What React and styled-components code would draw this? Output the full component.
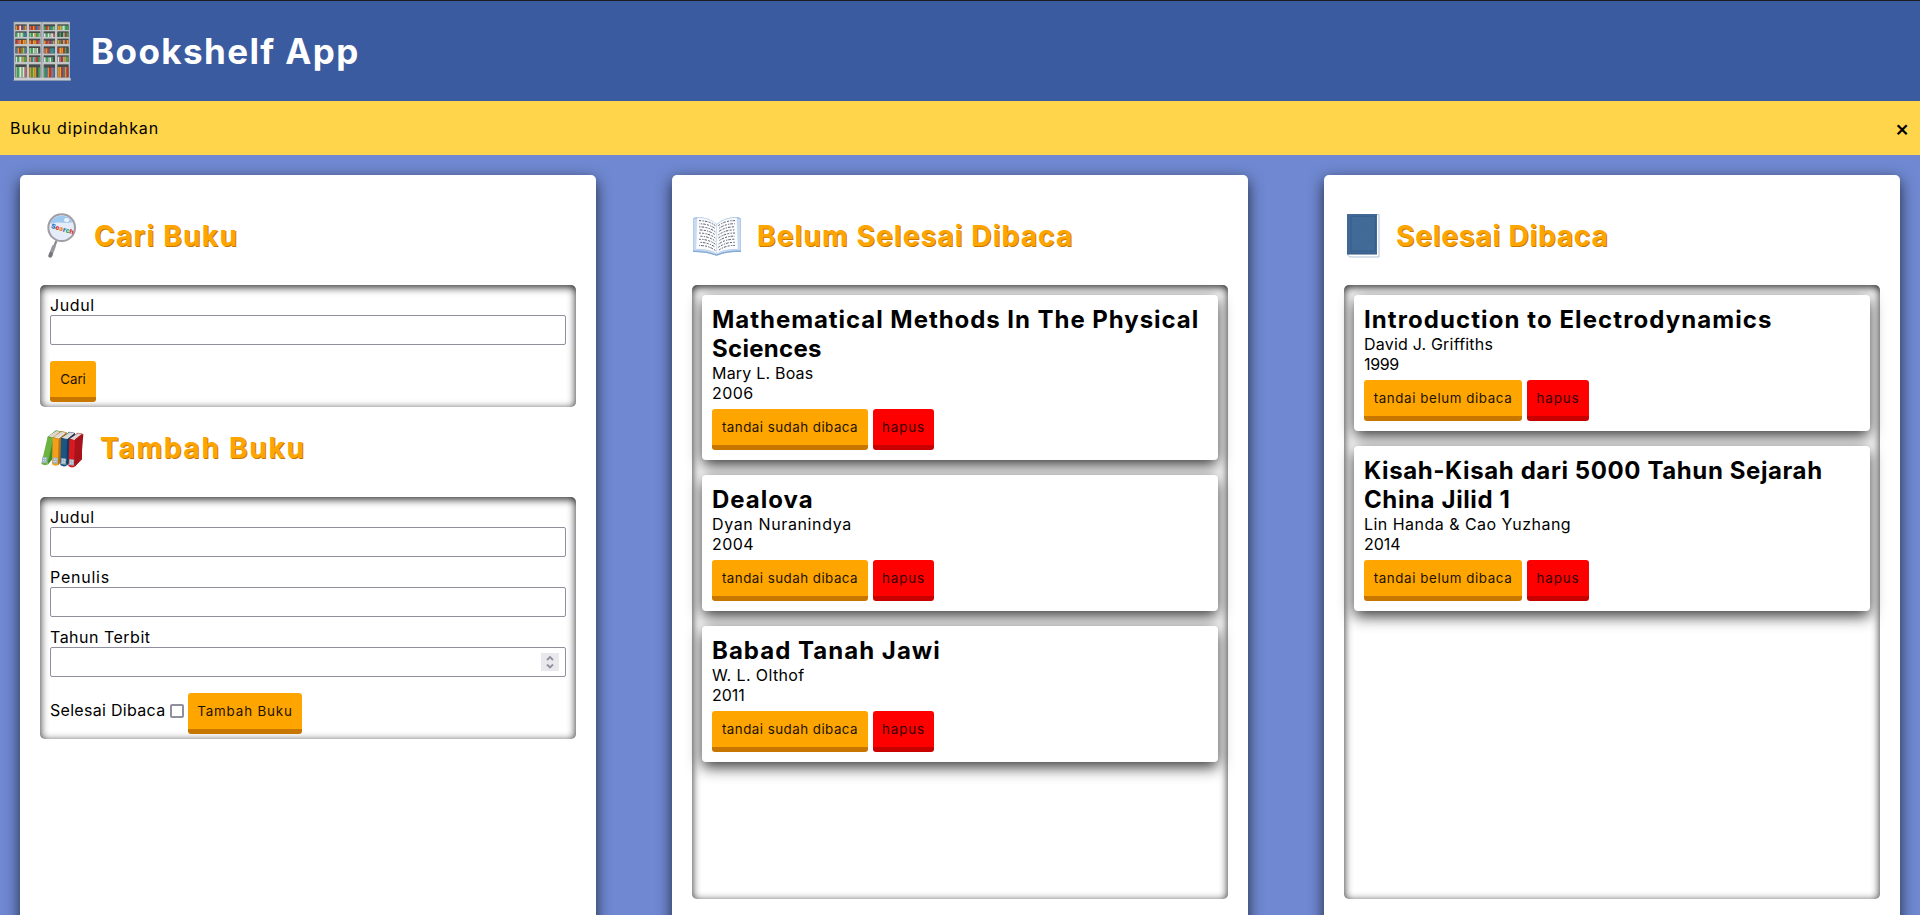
import React from 'react';
import styled, { createGlobalStyle } from 'styled-components';

const GlobalStyle = createGlobalStyle`
  *, *::before, *::after { box-sizing: border-box; }
  body {
    margin: 0;
    background: #6f88d1;
    color: #000;
    font: 16px/20px Inter, "Open Sans", sans-serif;
  }
  h1, h2, h3, p { margin: 0; }
`;

const Page = styled.div`
  height: 100vh;
  display: flex;
  flex-direction: column;
  overflow: hidden;
`;

const Header = styled.header`
  flex: none;
  display: flex;
  align-items: center;
  gap: 19px;
  height: 101px;
  padding: 0 12px;
  border-top: 1px solid #1c1b22;
  background: #3a5ba0;
`;

const Tracked = styled.span`
  letter-spacing: ${(p) => p.$track || 0}px;
  white-space: nowrap;
`;

const AppTitle = styled.h1`
  color: #fff;
  font-size: 35px;
  font-weight: 700;
  line-height: 44px;
`;

const Notification = styled.div`
  flex: none;
  display: flex;
  align-items: center;
  justify-content: space-between;
  height: 54px;
  padding: 0 10px;
  background: #ffd54b;
`;

const CloseButton = styled.button`
  width: 16px;
  padding: 0;
  border: 0;
  background: none;
  color: #000;
  font: 500 22px/20px Inter, sans-serif;
`;

const Main = styled.main`
  flex: none;
  display: flex;
  justify-content: space-between;
  padding: 20px;
`;

const Panel = styled.section`
  width: 576px;
  height: 764px;
  padding: 20px;
  border-radius: 5px;
  background: #fff;
  box-shadow: 0 5px 15px rgba(0, 0, 0, 0.7);
`;

const PanelHeading = styled.div`
  display: flex;
  align-items: center;
  gap: 15px;
  height: 80px;
  margin-bottom: 10px;
`;

const PanelTitle = styled.h2`
  padding-top: 1px;
  color: #ffa500;
  font-size: 28px;
  font-weight: 700;
  line-height: 34px;
  text-shadow: 1px 1px 0 #c77700;
`;

const Inset = styled.div`
  border-radius: 5px;
  box-shadow: inset 0 2px 8px rgba(0, 0, 0, 0.9);
`;

const Form = styled(Inset).attrs({ as: 'form' })`
  display: flex;
  flex-direction: column;
  gap: 10px;
  padding: 10px 10px 5px;
`;

const Field = styled.label`
  display: flex;
  flex-direction: column;
`;

const InputBox = styled.span`
  display: flex;
  align-items: center;
  height: 30px;
  padding-right: 6px;
  border: 1px solid #8f8f9d;
  border-radius: 2px;
  background: #fff;
`;

const Input = styled.input`
  flex: 1;
  min-width: 0;
  border: 0;
  outline: 0;
  background: none;
  font: inherit;
`;

const Spinner = styled.svg`
  flex: none;
  width: 18px;
  height: 18px;
  background: #e9e9ed;
`;

const FormActions = styled.div`
  display: flex;
  align-items: center;
  gap: 4px;
  margin-top: 6px;
`;

const CheckLabel = styled.label`
  display: flex;
  align-items: center;
  width: 134px;
  justify-content: space-between;
  padding-bottom: 7px;
`;

const Checkbox = styled.input.attrs({ type: 'checkbox' })`
  appearance: none;
  width: 14px;
  height: 14px;
  margin: 2px 0 0;
  border: 2px solid #8f8f9d;
  border-radius: 2px;
  background: #fff;
`;

const Button = styled.button`
  width: ${(p) => p.$width}px;
  height: 41px;
  padding: 0;
  border: 0;
  border-bottom: 5px solid ${(p) => (p.$danger ? '#c80000' : '#c77700')};
  border-radius: 3px;
  background: ${(p) => (p.$danger ? '#ff0000' : '#ffa500')};
  color: ${(p) => (p.$danger ? '#300' : '#1c1200')};
  font: 13.333px/16px Inter, sans-serif;
`;

const Shelf = styled(Inset)`
  display: flex;
  flex-direction: column;
  gap: 15px;
  height: 614px;
  padding: 10px;
`;

const Card = styled.article`
  padding: 10px;
  border-radius: 4px;
  background: #fff;
  box-shadow: 0 5px 15px rgba(0, 0, 0, 0.8);
`;

const BookTitle = styled.h3`
  display: flex;
  flex-direction: column;
  font-size: 24px;
  font-weight: 700;
  line-height: 29px;
`;

const CardActions = styled.div`
  display: flex;
  gap: 5px;
  margin-top: 6px;
`;

const Picture = styled.svg`
  flex: none;
  width: ${(p) => p.$w}px;
  height: ${(p) => p.$h}px;
`;

const SHELF_ROWS = [[25, 17], [46, 17], [68, 16], [91, 21], [118, 20], [145, 39]];
const SHELF_COLUMNS = [22, 63, 107, 148];
const SHELF_COLORS = {
  g: '#3fa458', l: '#86c48f', w: '#d9e2d6', r: '#bd3434', o: '#e0922b',
  y: '#d6ad33', b: '#3b7bae', p: '#b9676f', k: '#4a4f4c',
};
const SHELF_BOOKS = [
  ['orwrbo', 'prorbp', 'grobgl', 'oylwgg'],
  ['gwlwgb', 'lgwogl', 'wgwlwp', 'kgklrg'],
  ['rporyo', 'oryorp', 'orprbo', 'ogrlro'],
  ['borgyb', 'lgwlwk', 'porbgb', 'ryorgk'],
  ['wgwlog', 'oblprg', 'wglwgk', 'wprlog'],
  ['lgwlwp', 'ogyokg', 'gborpb', 'oyrbor'],
];

const BookshelfIcon = () => (
  <Picture $w={60} $h={60} viewBox="12 15 180 180">
    <path d="M17 17h169v173l3 4H16l2-4z" fill="#a9adb2" />
    <path d="M20 20h164v166H20z" fill="#c3c5c9" />
    {SHELF_ROWS.map(([y, h], row) =>
      SHELF_COLUMNS.map((x, col) => (
        <g key={`${row}-${col}`}>
          <rect x={x} y={y} width="34" height={h} fill="#454b4b" />
          {[...SHELF_BOOKS[row][col]].map((c, i) => (
            <rect
              key={i}
              x={x + 1 + i * 5.4}
              y={y + (row === 5 ? 8 : 4) + ((i * 3 + col) % 3)}
              width="5.2"
              height={h - (row === 5 ? 8 : 4) - ((i * 3 + col) % 3)}
              fill={SHELF_COLORS[c]}
            />
          ))}
        </g>
      ))
    )}
    <path d="M101 19v169" stroke="#a0a5ab" strokeWidth="4" />
    <path d="M18 189h170" stroke="#c9ccd0" strokeWidth="6" />
  </Picture>
);

const SearchIcon = () => (
  <Picture $w={39} $h={50} viewBox="15 15 117 150">
    <path d="M64 108 54 134" stroke="#8d8b91" strokeWidth="7" />
    <path d="M56 126 46 152" stroke="#99979d" strokeWidth="11" strokeLinecap="round" />
    <path d="M48 147 46 152" stroke="#77757c" strokeWidth="11" strokeLinecap="round" />
    <circle cx="80" cy="68" r="40" fill="#e3ecf8" stroke="#a09da5" strokeWidth="6" />
    <path d="M46 57a36 36 0 0 1 66-6c-14 7-39-4-66 6z" fill="#9fc9ee" />
    <ellipse cx="95" cy="45" rx="8" ry="6" fill="#fff" opacity=".8" />
    <text x="47" y="69" transform="rotate(16 47 69)" fontFamily="Inter, sans-serif" fontSize="20" fontWeight="800">
      <tspan fill="#1c6fc4">S</tspan>
      <tspan fill="#d8302c">e</tspan>
      <tspan fill="#ef8a20">a</tspan>
      <tspan fill="#1c6fc4">r</tspan>
      <tspan fill="#2aa04a">c</tspan>
      <tspan fill="#d8302c">h</tspan>
    </text>
  </Picture>
);

const STACK = [
  { x: 18, bottom: 134, top: 50, lean: 20, light: '#6cb33f', dark: '#458c25' },
  { x: 50, bottom: 136, top: 52, lean: 3, light: '#f2a01c', dark: '#b87310' },
  { x: 75, bottom: 138, top: 54, lean: 3, light: '#1c5584', dark: '#123a60' },
  { x: 99, bottom: 141, top: 57, lean: 4, light: '#d71920', dark: '#9e1018' },
];

const BooksIcon = () => (
  <Picture $w={45} $h={50} viewBox="15 6 135 150">
    {STACK.map(({ x, bottom, top, lean, light, dark }) => (
      <g key={x}>
        <path d={`M${x + lean} ${top} L${x + lean + 25} ${top - 19} l17 4 L${x + 40} ${bottom - 23} L${x + 20} ${bottom} z`} fill={dark} />
        <path d={`M${x + lean + 2} ${top - 1} l24 -16 14 3 -22 18 z`} fill="#e9e6df" />
        <path d={`M${x + lean + 7} ${top} l23 -17 M${x + lean + 12} ${top + 1} l22 -17`} stroke="#aaa9a4" strokeWidth="1" />
        <path d={`M${x + lean} ${top} q8 5 18 2 L${x + 19} ${bottom} q-10 4 -18 -3 z`} fill={light} />
        <path d={`M${x + 4} ${bottom - 24} l15 2 -2 18 -14 -2 z`} fill="#9bb4c4" />
        <path d={`M${x + 7} ${bottom - 19} l9 1 M${x + 6} ${bottom - 12} l9 1`} stroke="#e8f0f3" strokeWidth="3" strokeDasharray="3 2" />
      </g>
    ))}
    <path d="m120 58 21-17v77l-23 22z" fill="#a8121a" />
  </Picture>
);

const OpenBookIcon = () => (
  <Picture $w={50} $h={50} viewBox="12 6 150 150">
    <path d="M15 31 24 27Q61 26 86 48Q112 25 151 27l8 4v101q-44-2-73 12Q56 130 15 132z" fill="#a9c4e6" />
    <path d="M17 33h11v93q36-3 58 12 22-15 61-12V33h10v93q-44 0-71 14Q56 126 17 127z" fill="#c9dbf0" />
    <path d="M27 29q38-1 59 21v87q-23-15-62-13z" fill="#fbfcff" stroke="#b8cbe3" />
    <path d="M147 29q-38-1-61 21v87q24-15 64-13z" fill="#fbfcff" stroke="#b8cbe3" />
    {[0, 1, 2, 3, 4, 5, 6, 7, 8].map((i) => (
      <g key={i} fill="none" stroke="#3d4046" strokeWidth="2.6" strokeDasharray="6 4 4 3 8 4">
        <path strokeDashoffset={i * 5} d={`M33 ${38 + i * 9.3} q30 0 49 15`} />
        <path strokeDashoffset={i * 7} d={`M91 ${53 + i * 9.3} q22 -16 50 -15`} />
      </g>
    ))}
    <path d="M15 130q40 0 71 11 30-12 73-11" fill="none" stroke="#7fa5d2" strokeWidth="3" />
  </Picture>
);

const ClosedBookIcon = () => (
  <Picture $w={37} $h={50} viewBox="12 6 111 150">
    <path d="M23 20h94v127H29l-6-6z" fill="#fff" stroke="#9db4cd" strokeWidth="2.5" />
    <path d="M22 18h89v121H22z" fill="#416a97" />
    <path d="M33 25h73v105H33z" fill="none" stroke="#2f5785" strokeWidth="2" />
    <path d="M23 19v119M22 138h89" stroke="#274d7d" strokeWidth="2" />
    <path d="m43 50 8-4m25 32 12 3M48 99l9-3m26 20 10-2M61 38l8 2" stroke="#5179a8" strokeWidth="2" opacity=".6" />
  </Picture>
);

const Text = ({ value: [text, track] }) => <Tracked $track={track}>{text}</Tracked>;

const TextField = ({ label, number }) => (
  <Field>
    <Text value={label} />
    <InputBox>
      <Input type="text" inputMode={number ? 'numeric' : 'text'} />
      {number && (
        <Spinner viewBox="0 0 18 18" fill="none" stroke="#8f8f9d" strokeWidth="1.8">
          <path d="m6 7 3-3 3 3M6 11.500l3 3 3-3" />
        </Spinner>
      )}
    </InputBox>
  </Field>
);

const Heading = ({ icon, value }) => (
  <PanelHeading>
    {icon}
    <PanelTitle><Text value={value} /></PanelTitle>
  </PanelHeading>
);

const UNREAD = [
  { title: [['Mathematical Methods In The Physical', 0.95], ['Sciences', 0.3]], author: ['Mary L. Boas', 0.2], year: ['2006', 0.4] },
  { title: [['Dealova', 1]], author: ['Dyan Nuranindya', 0.62], year: ['2004', 0.4] },
  { title: [['Babad Tanah Jawi', 1.02]], author: ['W. L. Olthof', 0.38], year: ['2011', 0] },
];

const READ = [
  { title: [['Introduction to Electrodynamics', 1.08]], author: ['David J. Griffiths', 0.2], year: ['1999', -0.37] },
  { title: [['Kisah-Kisah dari 5000 Tahun Sejarah', 0.6], ['China Jilid 1', 0.62]], author: ['Lin Handa & Cao Yuzhang', 0.47], year: ['2014', 0] },
];

const BookList = ({ books, action, actionWidth, deleteWidth }) => (
  <Shelf>
    {books.map((book) => (
      <Card key={book.title[0][0]}>
        <BookTitle>
          {book.title.map((line) => <Text key={line[0]} value={line} />)}
        </BookTitle>
        <p><Text value={book.author} /></p>
        <p><Text value={book.year} /></p>
        <CardActions>
          <Button $width={actionWidth}><Text value={action} /></Button>
          <Button $danger $width={deleteWidth}><Text value={['hapus', 0.87]} /></Button>
        </CardActions>
      </Card>
    ))}
  </Shelf>
);

export default function App() {
  return (
    <Page>
      <GlobalStyle />
      <Header>
        <BookshelfIcon />
        <AppTitle><Text value={['Bookshelf App', 1.4]} /></AppTitle>
      </Header>
      <Notification>
        <Text value={['Buku dipindahkan', 0.88]} />
        <CloseButton>×</CloseButton>
      </Notification>
      <Main>
        <Panel>
          <Heading icon={<SearchIcon />} value={['Cari Buku', 1.3]} />
          <Form>
            <TextField label={['Judul', 0.62]} />
            <FormActions>
              <Button type="button" $width={46}><Text value={['Cari', 0]} /></Button>
            </FormActions>
          </Form>
          <Heading icon={<BooksIcon />} value={['Tambah Buku', 1.75]} />
          <Form>
            <TextField label={['Judul', 0.62]} />
            <TextField label={['Penulis', 0.77]} />
            <TextField label={['Tahun Terbit', 0.49]} number />
            <FormActions>
              <CheckLabel>
                <Text value={['Selesai Dibaca', 0.3]} />
                <Checkbox />
              </CheckLabel>
              <Button type="button" $width={114}><Text value={['Tambah Buku', 0.87]} /></Button>
            </FormActions>
          </Form>
        </Panel>
        <Panel>
          <Heading icon={<OpenBookIcon />} value={['Belum Selesai Dibaca', 1.18]} />
          <BookList books={UNREAD} action={['tandai sudah dibaca', 0.48]} actionWidth={156} deleteWidth={61} />
        </Panel>
        <Panel>
          <Heading icon={<ClosedBookIcon />} value={['Selesai Dibaca', 0.87]} />
          <BookList books={READ} action={['tandai belum dibaca', 0.59]} actionWidth={158} deleteWidth={62} />
        </Panel>
      </Main>
    </Page>
  );
}
